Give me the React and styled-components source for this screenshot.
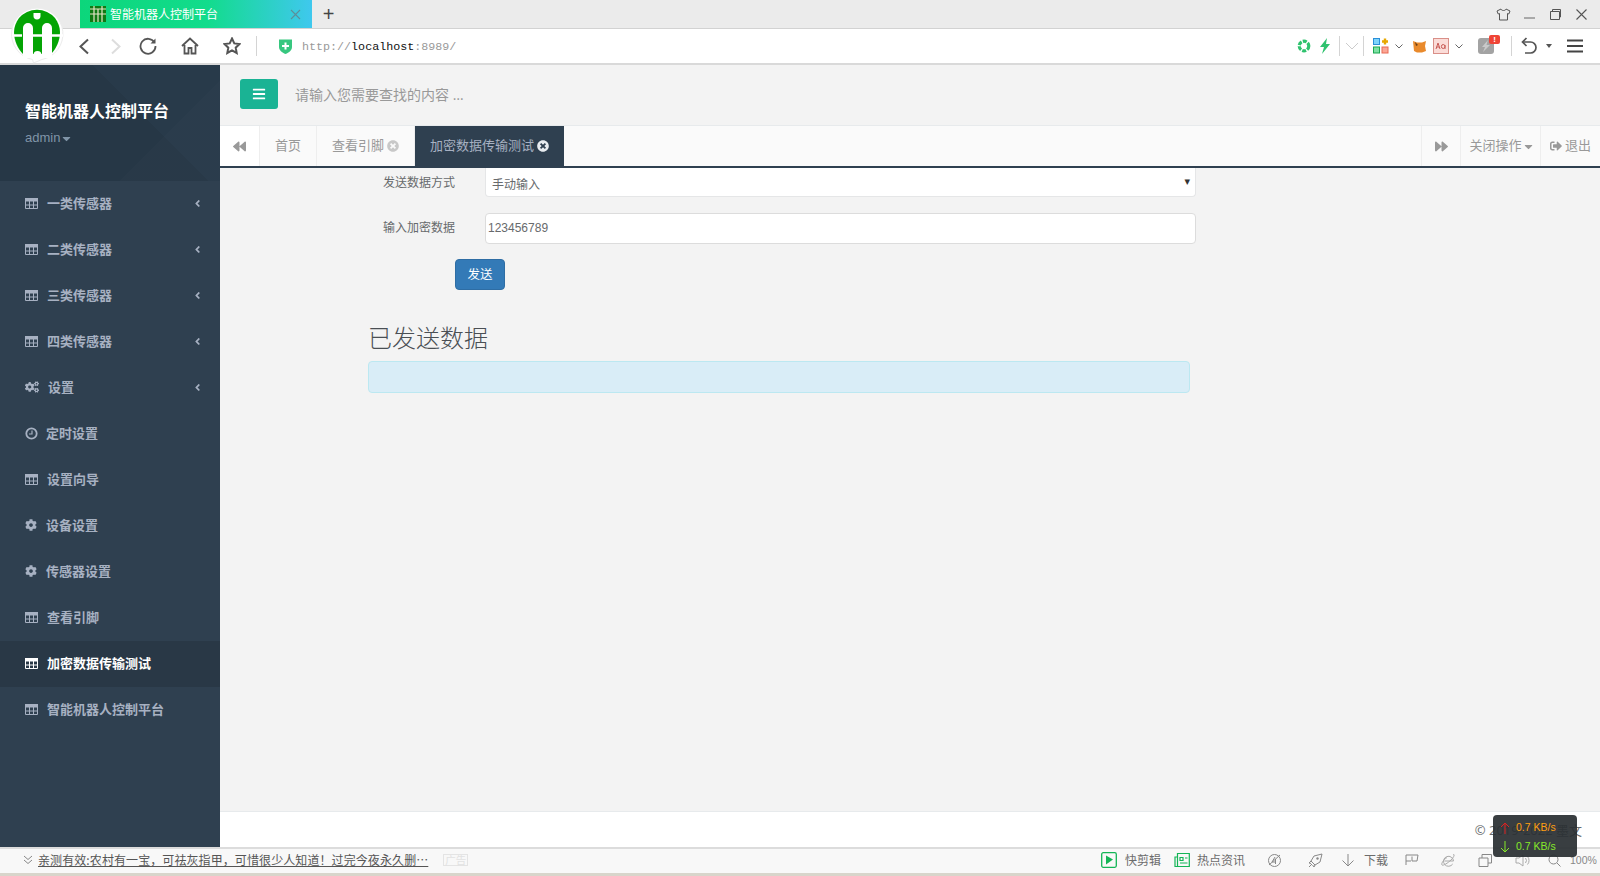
import React from 'react';
import styled, { createGlobalStyle } from 'styled-components';
import {
  FaBars, FaCogs, FaCog, FaBackward, FaForward,
  FaTimesCircle, FaSignOutAlt, FaAngleLeft, FaCaretDown,
} from 'react-icons/fa';

const CJK = '"Noto Sans CJK SC", "Open Sans", sans-serif';

const GlobalStyle = createGlobalStyle`
  html, body { margin: 0; padding: 0; height: 100%; overflow: hidden; }
  #root { height: 100%; }
  * { box-sizing: border-box; }
  body { font-family: "Open Sans", ${CJK}; font-size: 13px; color: #676a6c; }
`;

const Frame = styled.div`
  position: relative;
  display: flex;
  flex-direction: column;
  height: 876px;
  background: #f3f3f3;
`;

/* ---------- browser chrome ---------- */
const TabStrip = styled.div`
  display: flex;
  align-items: center;
  height: 29px;
  padding-left: 80px;
  background: #ebebeb;
  border-bottom: 1px solid #d2d2d2;
`;
const BrowserTab = styled.div`
  display: flex;
  align-items: center;
  width: 232px;
  height: 28px;
  padding-left: 10px;
  background: linear-gradient(90deg, #0cd67b 0%, #12dc8c 55%, #3fc8ee 100%);
  color: #fff;
  font-size: 12px;
  font-family: ${CJK};
`;
const TabTitle = styled.span`
  flex: 1;
  margin-left: 4px;
  padding-bottom: 2px;
`;
const NewTab = styled.div`
  width: 33px;
  text-align: center;
  font-size: 20px;
  line-height: 28px;
  color: #444;
  font-family: "Liberation Sans", sans-serif;
`;
const WindowButtons = styled.div`
  display: flex;
  margin-left: auto;
  padding-right: 6px;
`;
const WindowButton = styled.div`
  display: flex;
  align-items: center;
  justify-content: center;
  width: 26px;
  height: 28px;
`;
const Toolbar = styled.div`
  display: flex;
  align-items: center;
  height: 36px;
  padding-left: 68px;
  background: #fff;
  border-bottom: 2px solid #d9d9d9;
`;
const Slot = styled.div`
  display: flex;
  align-items: center;
  justify-content: center;
  flex: none;
  width: ${(p) => p.$w}px;
  margin-left: ${(p) => p.$ml || 0}px;
`;
const ToolSep = styled.div`
  flex: none;
  width: 1px;
  height: 20px;
  background: #d4d4d4;
  margin-left: ${(p) => p.$ml || 0}px;
`;
const UrlBar = styled.div`
  flex: none;
  width: 995px;
  margin: 2px 0 0 5px;
  font-family: "Liberation Mono", monospace;
  font-size: 11.7px;
  color: #999;
`;
const UrlHost = styled.span`
  color: #111;
`;
const Badge = styled.span`
  position: absolute;
  top: -3px;
  right: -6px;
  width: 11px;
  height: 9px;
  border-radius: 2px;
  background: #ef4436;
  color: #fff;
  font: bold 8px/9px "Liberation Sans", sans-serif;
  text-align: center;
`;
const BadgeWrap = styled.div`
  position: relative;
  display: flex;
`;
const LogoBadge = styled.svg`
  position: absolute;
  left: 9px;
  top: 6px;
`;

/* ---------- page body ---------- */
const Body = styled.div`
  flex: 1;
  display: flex;
  min-height: 0;
`;
const Sidebar = styled.aside`
  flex: none;
  width: 220px;
  background: #2f4050;
`;
const ProfileHeader = styled.div`
  height: 116px;
  padding: 34px 25px 0;
  background:
    linear-gradient(135deg, rgba(255,255,255,0) 70%, rgba(255,255,255,0.012) 70%),
    linear-gradient(45deg, #263746 62%, #283a4a 62%);
`;
const ProfileName = styled.div`
  font: bold 16px/22px ${CJK};
  color: #fff;
`;
const ProfileRole = styled.div`
  display: flex;
  align-items: center;
  margin-top: 8px;
  font: 13px/18px "Liberation Sans", sans-serif;
  color: #8095a8;
`;
const NavRow = styled.div`
  display: flex;
  align-items: center;
  height: 46px;
  padding: 0 17px 2px 25px;
  font: bold 13px/1 ${CJK};
  color: ${(p) => (p.$active ? '#fff' : '#a7b1c2')};
  background: ${(p) => (p.$active ? '#293846' : 'transparent')};
`;
const NavLabel = styled.span`
  flex: 1;
  margin: 0 0 2px ${(p) => p.$gap}px;
`;
const Main = styled.main`
  flex: 1;
  display: flex;
  flex-direction: column;
  min-width: 0;
`;
const TopNav = styled.div`
  display: flex;
  align-items: center;
  height: 61px;
  padding: 0 0 2px 20px;
  border-bottom: 1px solid #e7eaec;
`;
const MenuButton = styled.div`
  display: flex;
  align-items: center;
  justify-content: center;
  width: 38px;
  height: 30px;
  background: #1ab394;
  border-radius: 3px;
  color: #fff;
`;
const SearchHint = styled.div`
  margin: 2px 0 0 17px;
  font: 14px/20px "Open Sans", ${CJK};
  color: #999;
`;
const ContentTabs = styled.div`
  display: flex;
  height: 42px;
  background: #fafafa;
  border-bottom: 2px solid #2f4050;
`;
const RoundTab = styled.div`
  display: flex;
  align-items: center;
  justify-content: center;
  flex: none;
  width: ${(p) => p.$w}px;
  padding-left: ${(p) => p.$pl || 0}px;
  color: ${(p) => (p.$dark ? '#a7b1c2' : '#999')};
  background: ${(p) => (p.$dark ? '#2f4050' : p.$white ? '#fff' : 'transparent')};
  border-right: ${(p) => (p.$dark || p.$last ? 'none' : '1px solid #eee')};
  border-left: ${(p) => (p.$edge ? '1px solid #eee' : 'none')};
  font: 13px/1 ${CJK};
`;
const TabText = styled.span`
  margin-bottom: 3px;
  white-space: pre;
`;
const TabGap = styled.div`
  flex: 1;
`;
const TabClose = styled.span`
  display: flex;
  margin-left: 3px;
  color: ${(p) => (p.$dark ? '#e8ecf0' : '#c8c8c8')};
`;
const Content = styled.div`
  flex: 1;
  padding-left: 148px;
`;
const FormRow = styled.div`
  display: flex;
  align-items: center;
  margin-bottom: 16px;
`;
const FormLabel = styled.label`
  flex: none;
  width: 87px;
  margin: 0 30px ${(p) => p.$lift}px 0;
  text-align: right;
  font: 12px/18px ${CJK};
  color: #676a6c;
`;
const SelectWrap = styled.div`
  position: relative;
  width: 711px;
  &::after {
    content: '▾';
    position: absolute;
    right: 6px;
    top: 7px;
    font: 11px/14px "DejaVu Sans", sans-serif;
    color: #333;
  }
`;
const SelectBox = styled.select`
  display: block;
  width: 100%;
  height: 29px;
  padding: 2px 0 0 6px;
  border: 1px solid #e5e6e7;
  border-top: none;
  border-radius: 0 0 4px 4px;
  background: #fff;
  appearance: none;
  font: 12px ${CJK};
  color: #676a6c;
  outline: none;
`;
const TextBox = styled.input`
  display: block;
  width: 711px;
  height: 31px;
  padding: 0 2px 2px;
  border: 1px solid #dcdcdc;
  border-radius: 4px;
  background: #fff;
  font: 12px "Liberation Sans", sans-serif;
  color: #676a6c;
  outline: none;
`;
const SendButton = styled.button`
  display: block;
  width: 50px;
  height: 31px;
  margin: -1px 0 0 87px;
  padding: 0 0 3px;
  border: 1px solid #2e6da4;
  border-radius: 4px;
  background: #337ab7;
  color: #fff;
  font: 12.5px ${CJK};
`;
const Heading = styled.h3`
  margin: 31px 0 9px;
  font: 300 24px/31px ${CJK};
  color: #4a4f54;
`;
const InfoBox = styled.div`
  width: 822px;
  height: 32px;
  background: #d9edf7;
  border: 1px solid #bce8f1;
  border-radius: 4px;
`;
const Footer = styled.footer`
  display: flex;
  align-items: center;
  justify-content: flex-end;
  height: 36px;
  padding: 0 18px 0 0;
  background: #fff;
  border-top: 1px solid #e7eaec;
  font: 13px "Open Sans", ${CJK};
  color: #676a6c;
`;

/* ---------- status bar ---------- */
const StatusBar = styled.div`
  display: flex;
  align-items: center;
  height: 29px;
  padding: 0 0 2px 23px;
  background: #f8f8f8;
  border-top: 2px solid #dcdcdc;
  border-bottom: 3px solid #d8d5cb;
  font: 12px/1 ${CJK};
  color: #6c6c6c;
`;
const NewsLink = styled.span`
  margin-left: 5px;
  letter-spacing: 0.09px;
  text-decoration: underline;
  color: #555;
  white-space: nowrap;
`;
const AdTag = styled.span`
  margin-left: 15px;
  padding: 0 1px;
  border: 1px solid #e4e4e4;
  font-size: 10.5px;
  color: #e2e2e2;
`;
const StatusRight = styled.div`
  display: flex;
  align-items: center;
  margin-left: auto;
`;
const StatusText = styled.span`
  margin-left: ${(p) => p.$ml || 0}px;
  white-space: nowrap;
`;
const Zoom = styled.span`
  width: 30px;
  margin-left: 8px;
  font: 10.5px "Liberation Sans", sans-serif;
  color: #888;
`;
const SpeedBox = styled.div`
  position: absolute;
  left: 1493px;
  top: 815px;
  width: 84px;
  height: 42px;
  padding: 3px 0 0 7px;
  border-radius: 4px;
  background: rgba(42, 47, 51, 0.93);
  font: 10.5px/19px "Liberation Sans", sans-serif;
`;
const SpeedRow = styled.div`
  display: flex;
  align-items: center;
  color: ${(p) => p.$c};
`;
const SpeedArrow = styled.svg`
  flex: none;
  margin-right: 6px;
`;

const Line = { fill: 'none', stroke: '#555', strokeWidth: 1.6 };
const Thin = { fill: 'none', stroke: '#888', strokeWidth: 1 };

const Logo = () => (
  <LogoBadge width="56" height="60" viewBox="0 0 56 60">
    <path d="M28 2a26 26 0 0 1 5 51.500L24.500 57l-1-3.500A26 26 0 0 1 28 2z" fill="#fff" stroke="#ececec" />
    <path d="M10 12a23 22 0 0 1 36 0c3 4 5 9 5 14 0 9-4 17-9 22H14C9 43 5 35 5 26c0-5 2-10 5-14z" fill="#04a404" />
    <path d="M14 52V22a5 5 0 0 1 10 0v30zM33 52V22a5 5 0 0 1 10 0v30z" fill="#fff" />
    <path d="M28 13m-3.500 -6h7v3a3.500 3.500 0 0 1-7 0z" fill="#fff" />
    <path d="M3 29.500h10M24 29.500h9M43 29.500h11" stroke="#fff" strokeWidth="2.500" />
    <circle cx="28.500" cy="49" r="4" fill="#fff" />
  </LogoBadge>
);
const Favicon = () => (
  <svg width="16" height="16" viewBox="0 0 16 16">
    <rect width="16" height="16" fill="#0f7a12" />
    <path d="M4 0v16M8 3v13M12 0v16M0 3h16M0 8h16" stroke="#e8e4c8" strokeWidth="1.200" />
  </svg>
);
const TableIcon = () => (
  <svg width="13" height="11" viewBox="0 0 13 11">
    <path d="M.5.500h12v10H.5zM.5 7h12M4.500 3v7.500M8.500 3v7.500" fill="none" stroke="currentColor" />
    <rect width="13" height="3.500" fill="currentColor" />
  </svg>
);
const ClockIcon = () => (
  <svg width="13" height="13" viewBox="0 0 13 13">
    <circle cx="6.500" cy="6.500" r="5.200" fill="none" stroke="currentColor" strokeWidth="1.800" />
    <path d="M7 3.500V7H4" fill="none" stroke="currentColor" strokeWidth="1.200" />
  </svg>
);
const Chevron = () => (
  <svg width="8" height="5" viewBox="0 0 8 5"><path d="M.5.500L4 4 7.500.500" fill="none" stroke="#666" /></svg>
);

const navItems = [
  { label: '一类传感器', Icon: TableIcon, gap: 9, arrow: true },
  { label: '二类传感器', Icon: TableIcon, gap: 9, arrow: true },
  { label: '三类传感器', Icon: TableIcon, gap: 9, arrow: true },
  { label: '四类传感器', Icon: TableIcon, gap: 9, arrow: true },
  { label: '设置', Icon: () => <FaCogs size={14} />, gap: 9, arrow: true },
  { label: '定时设置', Icon: ClockIcon, gap: 8 },
  { label: '设置向导', Icon: TableIcon, gap: 9 },
  { label: '设备设置', Icon: () => <FaCog size={12} />, gap: 9 },
  { label: '传感器设置', Icon: () => <FaCog size={12} />, gap: 9 },
  { label: '查看引脚', Icon: TableIcon, gap: 9 },
  { label: '加密数据传输测试', Icon: TableIcon, gap: 9, active: true },
  { label: '智能机器人控制平台', Icon: TableIcon, gap: 9 },
];

export default function App() {
  return (
    <Frame>
      <GlobalStyle />
      <TabStrip>
        <BrowserTab>
          <Favicon />
          <TabTitle>智能机器人控制平台</TabTitle>
          <Slot $w={34}>
            <svg width="11" height="11" viewBox="0 0 11 11"><path d="M1 1l9 9M10 1l-9 9" stroke="#5d8f9a" strokeWidth="1.100" /></svg>
          </Slot>
        </BrowserTab>
        <NewTab>+</NewTab>
        <WindowButtons>
          <WindowButton>
            <svg width="15" height="13" viewBox="0 0 15 13"><path d="M5 1L1 3l1.200 3 1.300-.5V12h8V5.500l1.300.5L14 3l-4-2c-.5 2-4.500 2-5 0z" fill="none" stroke="#555" /></svg>
          </WindowButton>
          <WindowButton>
            <svg width="13" height="13" viewBox="0 0 13 13"><path d="M1 10h11" stroke="#666" /></svg>
          </WindowButton>
          <WindowButton>
            <svg width="13" height="13" viewBox="0 0 13 13"><path d="M1.500 3.500h9v8h-9zM3.500 3V1.500h8V9H11" fill="none" stroke="#555" /></svg>
          </WindowButton>
          <WindowButton>
            <svg width="13" height="13" viewBox="0 0 13 13"><path d="M1.500 1.500l10 10M11.500 1.500l-10 10" stroke="#555" strokeWidth="1.100" /></svg>
          </WindowButton>
        </WindowButtons>
      </TabStrip>

      <Toolbar>
        <Slot $w={32}><svg width="12" height="17" viewBox="0 0 12 17"><path d="M10 1.500L2.500 8.500l7.500 7" {...Line} strokeWidth="2" /></svg></Slot>
        <Slot $w={32}><svg width="12" height="17" viewBox="0 0 12 17"><path d="M2 1.500l7.500 7-7.500 7" {...Line} stroke="#ddd" strokeWidth="2" /></svg></Slot>
        <Slot $w={32}><svg width="18" height="18" viewBox="0 0 18 18"><path d="M15.500 5.500A7.500 7.500 0 1 0 16.500 9" {...Line} strokeWidth="1.800" /><path d="M16.500 1.500v5h-5z" fill="#555" /></svg></Slot>
        <Slot $w={32} $ml={10}><svg width="18" height="18" viewBox="0 0 18 18"><path d="M1 9l8-7.500L17 9M3.500 8v8.500h4V11h3v5.500h4V8" {...Line} strokeWidth="1.800" /></svg></Slot>
        <Slot $w={32} $ml={10}><svg width="18" height="18" viewBox="0 0 18 18"><path d="M9 1.500l2.300 4.900 5.200.7-3.800 3.600 1 5.300L9 13.400l-4.700 2.600 1-5.300-3.800-3.600 5.200-.7z" {...Line} strokeWidth="2" /></svg></Slot>
        <ToolSep $ml={8} />
        <Slot $w={24} $ml={16}><svg width="15" height="17" viewBox="0 0 15 17"><path d="M1 1.500h13V9c0 3.500-3 5.500-6.500 7C4 14.500 1 12.500 1 9z" fill="#37c77f" /><path d="M7.500 4.500v7M4 8h7" stroke="#fff" strokeWidth="2" /></svg></Slot>
        <UrlBar>http://<UrlHost>localhost</UrlHost>:8989/</UrlBar>
        <Slot $w={14}><svg width="14" height="14" viewBox="0 0 14 14"><circle cx="7" cy="7" r="4.800" fill="none" stroke="#2fc26e" strokeWidth="3.200" strokeDasharray="4 1.200" /></svg></Slot>
        <Slot $w={14} $ml={7}><svg width="12" height="16" viewBox="0 0 12 16"><path d="M8 0L1 9h4l-2 7 8-10H7z" fill="#2fc26e" /></svg></Slot>
        <ToolSep $ml={7} />
        <Slot $w={16} $ml={4}><svg width="14" height="8" viewBox="0 0 14 8"><path d="M1 1l6 6 6-6" fill="none" stroke="#ccc" /></svg></Slot>
        <ToolSep $ml={3} />
        <Slot $w={16} $ml={9}>
          <svg width="16" height="16" viewBox="0 0 16 16">
            <rect x=".5" y=".5" width="6" height="6" fill="#7dd3fb" stroke="#2a8fd8" />
            <rect x=".5" y="9" width="6" height="6" fill="#7fe0a4" stroke="#1aa850" />
            <rect x="9" y="9" width="6" height="6" fill="#fba695" stroke="#e86a55" />
            <path d="M12 .5v6M9 3.500h6" stroke="#e8a800" strokeWidth="2.400" />
          </svg>
        </Slot>
        <Slot $w={10} $ml={5}><Chevron /></Slot>
        <Slot $w={14} $ml={8}><svg width="13" height="13" viewBox="0 0 13 13"><path d="M0 1l4 1.500h5L13 1l-1 5 1 5-4 1.500H4L1 11l-.5-5z" fill="#e98a2c" /><path d="M2 2l3 3-2 1z" fill="#6b3f14" /></svg></Slot>
        <Slot $w={16} $ml={7}><svg width="16" height="16" viewBox="0 0 16 16"><rect x=".5" y=".5" width="15" height="15" fill="#fbdcd8" stroke="#d98f88" /><path d="M3 11l2-6 2 6M3.800 9h2.400M12 7v4M12 8.500a1.800 2 0 1 1-3.600 0 1.800 2 0 1 1 3.600 0z" fill="none" stroke="#c85a55" /></svg></Slot>
        <Slot $w={10} $ml={5}><Chevron /></Slot>
        <Slot $w={16} $ml={14}>
          <BadgeWrap>
            <svg width="16" height="16" viewBox="0 0 16 16"><rect width="16" height="16" rx="3" fill="#a3a3a3" /><path d="M10 2L4 9h3l-2 5 7-7H8.500z" fill="#c9c9c9" /></svg>
            <Badge>!</Badge>
          </BadgeWrap>
        </Slot>
        <ToolSep $ml={17} />
        <Slot $w={20} $ml={7}><svg width="16" height="18" viewBox="0 0 16 18"><path d="M2 5h7.500a5.500 5.500 0 0 1 0 11H4" {...Line} strokeWidth="1.700" /><path d="M5.500 1L1.500 5l4 4" {...Line} strokeWidth="1.700" /></svg></Slot>
        <Slot $w={8} $ml={6}><svg width="6" height="4" viewBox="0 0 6 4"><path d="M0 0h6L3 4z" fill="#555" /></svg></Slot>
        <Slot $w={18} $ml={13}><svg width="16" height="14" viewBox="0 0 16 14"><path d="M0 1.500h16M0 7h16M0 12.500h16" stroke="#444" strokeWidth="2" /></svg></Slot>
      </Toolbar>

      <Logo />

      <Body>
        <Sidebar>
          <ProfileHeader>
            <ProfileName>智能机器人控制平台</ProfileName>
            <ProfileRole>admin<FaCaretDown size={13} /></ProfileRole>
          </ProfileHeader>
          {navItems.map(({ label, Icon, gap, arrow, active }) => (
            <NavRow key={label} $active={active}>
              <Icon />
              <NavLabel $gap={gap}>{label}</NavLabel>
              {arrow && <FaAngleLeft size={11} />}
            </NavRow>
          ))}
        </Sidebar>
        <Main>
          <TopNav>
            <MenuButton><FaBars size={14} /></MenuButton>
            <SearchHint>请输入您需要查找的内容 …</SearchHint>
          </TopNav>
          <ContentTabs>
            <RoundTab $w={40} $white><FaBackward size={13} /></RoundTab>
            <RoundTab $w={57}><TabText>首页</TabText></RoundTab>
            <RoundTab $w={98}><TabText>查看引脚</TabText><TabClose><FaTimesCircle size={12} /></TabClose></RoundTab>
            <RoundTab $w={149} $dark><TabText>加密数据传输测试</TabText><TabClose $dark><FaTimesCircle size={12} /></TabClose></RoundTab>
            <TabGap />
            <RoundTab $w={40} $edge><FaForward size={13} /></RoundTab>
            <RoundTab $w={80} $pl={3}><TabText>关闭操作</TabText><FaCaretDown size={13} /></RoundTab>
            <RoundTab $w={59} $last><FaSignOutAlt size={12} /><TabText> 退出</TabText></RoundTab>
          </ContentTabs>
          <Content>
            <FormRow>
              <FormLabel $lift={1}>发送数据方式</FormLabel>
              <SelectWrap>
                <SelectBox defaultValue="manual">
                  <option value="manual">手动输入</option>
                </SelectBox>
              </SelectWrap>
            </FormRow>
            <FormRow>
              <FormLabel $lift={3}>输入加密数据</FormLabel>
              <TextBox readOnly defaultValue="123456789" />
            </FormRow>
            <SendButton>发送</SendButton>
            <Heading>已发送数据</Heading>
            <InfoBox />
          </Content>
          <Footer>© 2019-2022 墨文</Footer>
        </Main>
      </Body>

      <StatusBar>
        <svg width="10" height="10" viewBox="0 0 10 10"><path d="M1 1l4 3.500L9 1M1 5l4 3.500L9 5" {...Thin} /></svg>
        <NewsLink>亲测有效:农村有一宝，可祛灰指甲，可惜很少人知道！过完今夜永久删…</NewsLink>
        <AdTag>广告</AdTag>
        <StatusRight>
          <svg width="16" height="16" viewBox="0 0 16 16"><rect x=".7" y=".7" width="14.600" height="14.600" rx="1.500" fill="none" stroke="#13b556" strokeWidth="1.300" /><path d="M5 3.500l7 4-7 5z" fill="#13b556" /></svg>
          <StatusText $ml={8}>快剪辑</StatusText>
          <Slot $w={16} $ml={13}><svg width="16" height="16" viewBox="0 0 16 16"><path d="M3.500 1.500h11.800v13H1V5h2.500zM3.500 5v9.500M6 5.500h3v3H6zM11 6h2.500M6 11h7.500" fill="none" stroke="#13b556" strokeWidth="1.200" /></svg></Slot>
          <StatusText $ml={7}>热点资讯</StatusText>
          <Slot $w={16} $ml={22}><svg width="15" height="15" viewBox="0 0 15 15"><circle cx="7.500" cy="7.500" r="6" {...Thin} /><path d="M8 4L5 9h4M8.500 6v5M2 12L13 2" {...Thin} /></svg></Slot>
          <Slot $w={16} $ml={25}><svg width="15" height="15" viewBox="0 0 15 15"><path d="M14 1L6 3 3 8l4 4 5-3zM3 8l-2 2 2 .5M7 12l-1 2-1.500-2M1 14l3-3" {...Thin} /><circle cx="9.500" cy="5.500" r="1.200" fill="#888" /></svg></Slot>
          <Slot $w={16} $ml={16}><svg width="14" height="14" viewBox="0 0 14 14"><path d="M7 1v12M1.500 7.500L7 13l5.500-5.500" {...Thin} /></svg></Slot>
          <StatusText $ml={8}>下载</StatusText>
          <Slot $w={16} $ml={16}><svg width="14" height="12" viewBox="0 0 14 12"><path d="M1 11V1h12l-1 6H7V2.500M1 7h5" {...Thin} /></svg></Slot>
          <Slot $w={16} $ml={20}><svg width="14" height="14" viewBox="0 0 14 14"><path d="M3.500 8h9a5 5 0 1 0-.8 3M12 2c2-1.500 1.500 1.500-2 5-3 3-8 6-9 5s1-5 5-7.500" {...Thin} stroke="#aaa" /></svg></Slot>
          <Slot $w={16} $ml={21}><svg width="14" height="13" viewBox="0 0 14 13"><path d="M1 4h9v8.500H1zM4 4V.5h9.500V9H10" {...Thin} /></svg></Slot>
          <Slot $w={16} $ml={21}><svg width="15" height="13" viewBox="0 0 15 13"><path d="M1 4h3l4-3v11L4 9H1zM10.500 4a4 4 0 0 1 0 5M12.500 2.500a6 6 0 0 1 0 8" {...Thin} stroke="#aaa" /></svg></Slot>
          <Slot $w={16} $ml={16}><svg width="13" height="13" viewBox="0 0 13 13"><circle cx="5.500" cy="5.500" r="4.500" {...Thin} /><path d="M9 9l3.500 3.500" {...Thin} /></svg></Slot>
          <Zoom>100%</Zoom>
        </StatusRight>
      </StatusBar>

      <SpeedBox>
        <SpeedRow $c="#ff9f10">
          <SpeedArrow width="10" height="12" viewBox="0 0 10 12"><path d="M5 12V1M1 5l4-4 4 4" fill="none" stroke="#e02020" /></SpeedArrow>
          0.7 KB/s
        </SpeedRow>
        <SpeedRow $c="#86e82a">
          <SpeedArrow width="10" height="12" viewBox="0 0 10 12"><path d="M5 0v11M1 7l4 4 4-4" fill="none" stroke="#86e82a" /></SpeedArrow>
          0.7 KB/s
        </SpeedRow>
      </SpeedBox>
    </Frame>
  );
}
